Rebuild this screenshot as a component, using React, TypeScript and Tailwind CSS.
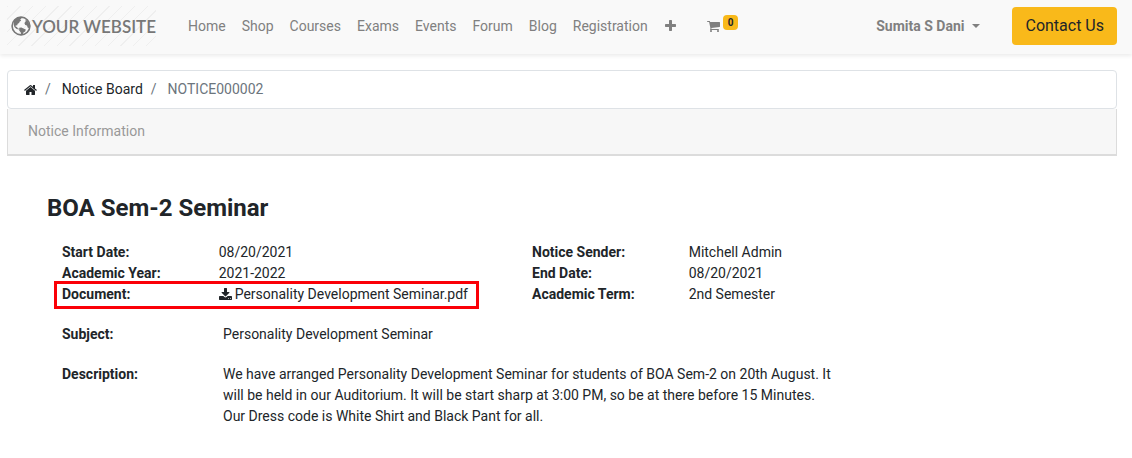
import type { ReactNode } from "react";

const ICONS = {
  home: "M1472 992v480q0 26-19 45t-45 19h-384v-384h-256v384h-384q-26 0-45-19t-19-45v-480q0-1 .5-3t.5-3l575-474 575 474q1 2 1 6zm223-69l-62 74q-8 9-21 11h-3q-13 0-21-7l-692-577-692 577q-12 8-24 7-13-2-21-11l-62-74q-8-10-7-23.5t11-21.5l719-599q32-26 76-26t76 26l244 204v-195q0-14 9-23t23-9h192q14 0 23 9t9 23v408l219 182q10 8 11 21.5t-7 23.5z",
  cart: "M704 1536q0 52-38 90t-90 38-90-38-38-90 38-90 90-38 90 38 38 90zm896 0q0 52-38 90t-90 38-90-38-38-90 38-90 90-38 90 38 38 90zm128-1088v512q0 24-16.5 42.5t-40.5 21.5l-1044 122q13 60 13 70 0 16-24 64h920q26 0 45 19t19 45-19 45-45 19h-1024q-26 0-45-19t-19-45q0-11 8-31.5t16-36 21.5-40 15.5-29.5l-177-823h-204q-26 0-45-19t-19-45 19-45 45-19h256q16 0 28.5 6.5t19.5 15.5 13 24.5 8 26 5.5 29.5 4.5 26h1201q26 0 45 19t19 45z",
  plus: "M1600 736v192q0 40-28 68t-68 28h-416v416q0 40-28 68t-68 28h-192q-40 0-68-28t-28-68v-416h-416q-40 0-68-28t-28-68v-192q0-40 28-68t68-28h416v-416q0-40 28-68t68-28h192q40 0 68 28t28 68v416h416q40 0 68 28t28 68z",
  download:
    "M1344 1344q0-26-19-45t-45-19-45 19-19 45 19 45 45 19 45-19 19-45zm256 0q0-26-19-45t-45-19-45 19-19 45 19 45 45 19 45-19 19-45zm128-224v320q0 40-28 68t-68 28h-1472q-40 0-68-28t-28-68v-320q0-40 28-68t68-28h465l135 136q58 56 136 56t136-56l136-136h464q40 0 68 28t28 68zm-325-569q17 41-14 70l-448 448q-18 19-45 19t-45-19l-448-448q-31-29-14-70 17-39 59-39h256v-448q0-26 19-45t45-19h256q26 0 45 19t19 45v448h256q42 0 59 39z",
};

const navLinks = ["Home", "Shop", "Courses", "Exams", "Events", "Forum", "Blog", "Registration"];

function Icon({ name }: { name: keyof typeof ICONS }) {
  return (
    <svg viewBox="64 0 1664 1792" className="h-[14px] w-[13px] shrink-0 fill-current" aria-hidden="true">
      <path d={ICONS[name]} />
    </svg>
  );
}

function Logo() {
  return (
    <a
      href="#"
      className="flex h-10 items-center bg-[repeating-linear-gradient(135deg,#efefef_0px,#efefef_1px,transparent_1px,transparent_9px)] pl-1 font-['Lato',sans-serif] text-[17px] font-semibold whitespace-nowrap text-[#777]"
    >
      <svg viewBox="0 0 20 20" className="mr-px size-5" aria-hidden="true">
        <circle cx="10" cy="10" r="8.9" fill="none" stroke="currentColor" strokeWidth="1.6" />
        <path
          fill="currentColor"
          d="M3 4.2 6 1.8l3.6-.5 1 1.2-1.4.9 1 1.4-1.5.6-.6 1.6-1.4.8-.6 1.6-1.3-.2-.2 1.4 1.4.4.8 1.4 1.4.4-.6.8-2.4-.8L3.4 11 2.6 8z"
        />
        <path fill="currentColor" d="m8.2 11.8 2.2-.4 2 1 2.4 1-.6 2-1.8 1.2-.8 2.2-1.6.4-.2-2.8-1.6-2z" />
        <path fill="currentColor" d="m14.6 3.4 2.6 2.2 1.5 3.8-.5 2.8-1.6-.6-.6-2-1.8-.6-.8-2 1.2-1.4z" />
      </svg>
      YOUR WEBSITE
    </a>
  );
}

function Field({ label, children }: { label: string; children: ReactNode }) {
  return (
    <div className="relative grid grid-cols-3">
      <dt className="font-bold">{label}</dt>
      <dd className="col-span-2">{children}</dd>
    </div>
  );
}

export default function App() {
  return (
    <div className="bg-white font-['Roboto',sans-serif] text-[14px] leading-[21px] text-[#212529]">
      <header className="flex items-center bg-[#f9f9f9] pt-[6px] pr-[15px] pb-2 pl-[7px] shadow-[0_2px_4px_rgba(0,0,0,0.08)]">
        <Logo />
        <nav className="ml-6 flex items-center text-[#808080]">
          {navLinks.map((link) => (
            <a key={link} href="#" className="px-2 hover:text-[#4d4d4d]">
              {link}
            </a>
          ))}
          <button type="button" aria-label="More" className="px-2">
            <Icon name="plus" />
          </button>
          <a href="#" aria-label="My Cart" className="ml-[14px] flex items-center px-2">
            <Icon name="cart" />
            <sup className="-top-1 ml-[3px] rounded-sm bg-[#f9b91a] px-[5px] text-[10px] leading-[15px] font-bold text-[#212529]">
              0
            </sup>
          </a>
        </nav>
        <div className="ml-auto flex items-center">
          <button type="button" className="flex items-center font-bold text-[#808080]">
            Sumita S Dani
            <span className="ml-2 border-x-4 border-t-4 border-x-transparent border-t-current" />
          </button>
          <a href="#" className="ml-8 rounded-[4px] bg-[#f9b91a] px-[13px] py-[7px] text-[16px] leading-6">
            Contact Us
          </a>
        </div>
      </header>

      <main className="pt-4 pr-[15px] pl-[7px]">
        <nav aria-label="Breadcrumb" className="rounded-[4px] border border-[#dee2e6] px-4 py-2">
          <ol className="flex items-center text-[#6c757d]">
            <li className="text-[#212529]">
              <a href="#" aria-label="Home">
                <Icon name="home" />
              </a>
            </li>
            <li className="px-2">/</li>
            <li className="pl-[3px] text-[#212529]">
              <a href="#">Notice Board</a>
            </li>
            <li className="px-2">/</li>
            <li className="pl-[3px]">NOTICE000002</li>
          </ol>
        </nav>

        <section>
          <div className="border-x border-b-2 border-[#dcdcdc] bg-[#f7f7f7] px-5 py-3 text-[#999]">
            Notice Information
          </div>

          <div className="px-10 pt-9 pb-8">
            <h1 className="text-[24px] leading-8 font-bold">BOA Sem-2 Seminar</h1>
            <div className="max-w-[955px] pt-[18px] pl-[15px]">
              <div className="grid grid-cols-2">
                <dl>
                  <Field label="Start Date:">08/20/2021</Field>
                  <Field label="Academic Year:">2021-2022</Field>
                  <Field label="Document:">
                    <a href="#" className="flex items-center gap-[3px]">
                      <Icon name="download" />
                      Personality Development Seminar.pdf
                    </a>
                    <span className="pointer-events-none absolute -top-[3px] right-[53px] -bottom-1 -left-2 border-3 border-[#fb0007]" />
                  </Field>
                </dl>
                <dl>
                  <Field label="Notice Sender:">Mitchell Admin</Field>
                  <Field label="End Date:">08/20/2021</Field>
                  <Field label="Academic Term:">2nd Semester</Field>
                </dl>
              </div>
              <dl className="mt-[19px] grid grid-cols-[161px_1fr] gap-y-[19px]">
                <dt className="font-bold">Subject:</dt>
                <dd>Personality Development Seminar</dd>
                <dt className="font-bold">Description:</dt>
                <dd className="max-w-[614px]">
                  We have arranged Personality Development Seminar for students of BOA Sem-2 on 20th August. It will be
                  held in our Auditorium. It will be start sharp at 3:00 PM, so be at there before 15 Minutes. Our Dress
                  code is White Shirt and Black Pant for all.
                </dd>
              </dl>
            </div>
          </div>
        </section>
      </main>
    </div>
  );
}
